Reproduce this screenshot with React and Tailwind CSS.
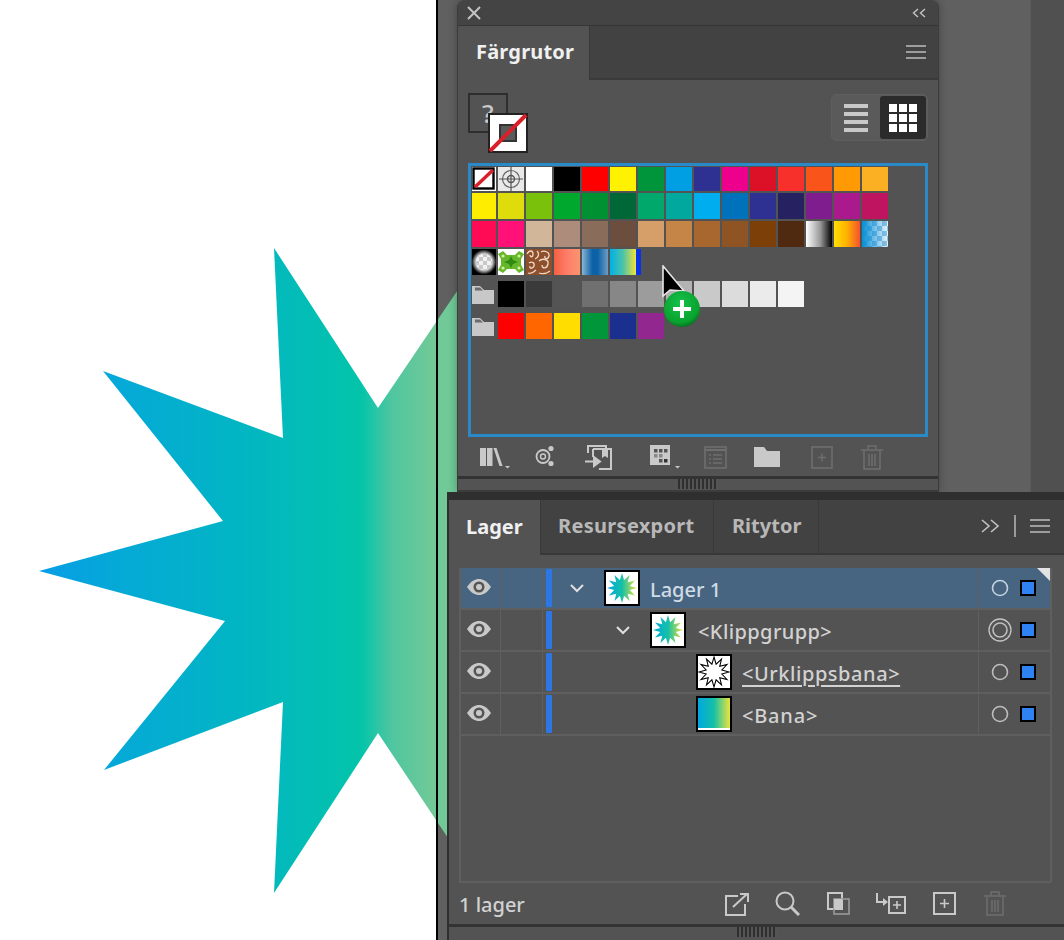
import React from "react";

const font = { fontFamily: '"Noto Sans", "Open Sans", sans-serif' };

function Sw({ c, first }) {
  return <div className={`${first ? "w-[24px]" : "w-[26px]"} h-full shrink-0`} style={c ? { background: c } : undefined} />;
}

function SwatchNone() {
  return (
    <svg width="24" height="24" viewBox="0 0 24 24" className="shrink-0">
      <rect width="24" height="24" fill="#fff" />
      <rect x="1.500" y="1.500" width="20" height="20" fill="#fff" stroke="#000" strokeWidth="2.400" />
      <path d="M3 20 L21 3" stroke="#d8202a" strokeWidth="3.400" />
    </svg>
  );
}
function SwatchRegister() {
  return (
    <svg width="26" height="24" viewBox="0 0 26 24" className="shrink-0">
      <rect width="26" height="24" fill="#e9e9e9" />
      <circle cx="13" cy="12" r="8.500" fill="none" stroke="#666" strokeWidth="1.200" />
      <circle cx="13" cy="12" r="3.500" fill="none" stroke="#555" strokeWidth="1.400" />
      <path d="M13 0V24M1 12H25" stroke="#555" strokeWidth="1.200" />
    </svg>
  );
}
function SwatchGlow() {
  return (
    <svg width="24" height="26" viewBox="1 0 24 26" className="shrink-0">
      <defs>
        <radialGradient id="glow">
          <stop offset="0.6" stopColor="#f0f0f0" />
          <stop offset="1" stopColor="#000" />
        </radialGradient>
        <pattern id="chk" width="8" height="8" patternUnits="userSpaceOnUse">
          <rect width="8" height="8" fill="#f2f2f2" />
          <rect width="4" height="4" fill="#c8c8c8" />
          <rect x="4" y="4" width="4" height="4" fill="#c8c8c8" />
        </pattern>
      </defs>
      <rect width="26" height="26" fill="#000" />
      <circle cx="13" cy="13" r="12.500" fill="url(#glow)" />
      <circle cx="13" cy="13" r="8" fill="url(#chk)" />
    </svg>
  );
}
function SwatchGreen() {
  return (
    <svg width="26" height="26" viewBox="0 0 26 26" className="shrink-0">
      <rect width="26" height="26" fill="#fff" />
      <path d="M0 5 L5 2 L9 6 L17 6 L21 2 L26 5 L23 10 L23 16 L26 21 L21 24 L17 20 L9 20 L5 24 L0 21 L3 16 L3 10Z" fill="#66b82a" />
      <path d="M13 7 L15 11 L20 13 L15 15 L13 19 L11 15 L6 13 L11 11Z" fill="#2f8a12" />
      <circle cx="5" cy="7" r="1.600" fill="#d4ee9a" />
      <circle cx="21" cy="7" r="1.600" fill="#d4ee9a" />
      <circle cx="5" cy="19" r="1.600" fill="#d4ee9a" />
      <circle cx="21" cy="19" r="1.600" fill="#d4ee9a" />
    </svg>
  );
}
function SwatchBrown() {
  return (
    <svg width="26" height="26" viewBox="0 0 26 26" className="shrink-0">
      <rect width="26" height="26" fill="#8e4f2c" />
      <g fill="none" stroke="#eed9c4" strokeWidth="1.300">
        <path d="M1 5c2-4 6-4 6 0s-3 3-3 1" />
        <path d="M11 2c3 3 1 7-2 8" />
        <path d="M15 3c3-2 9 0 8 4s-5 3-4 0" />
        <path d="M3 14c3-2 6 0 5 3s-5 3-4 0" />
        <path d="M13 12c3-3 10-2 9 3s-6 5-6 1" />
        <path d="M2 24c3 1 6-1 8-3" />
        <path d="M13 24c3 1 7 1 11-2" />
      </g>
    </svg>
  );
}

const row1 = ["#fff", "#000", "#ff0000", "#fff200", "#00953a", "#009fe3", "#2e3192", "#ec008c", "#dc1128", "#f7302c", "#f9541a", "#ff9a05", "#fbb023"];
const row2 = ["#ffed00", "#dedc0a", "#7ac10c", "#00a82d", "#009133", "#006837", "#00a86b", "#00a89d", "#00aeef", "#0072bc", "#2e3192", "#262262", "#7f1d8f", "#aa1a8c", "#bf1560"];
const row3 = ["#ff0a55", "#ff1178", "#d1b69a", "#ad8c7c", "#8a6c5a", "#6c4e3e", "#d69e68", "#c58547", "#a8672f", "#8f5423", "#7c3f08", "#4f2a10"];
const row5 = ["#000", "#3a3a3a", "#545454", "#707070", "#878787", "#9c9c9c", "#b3b3b3", "#c9c9c9", "#dcdcdc", "#ebebeb", "#f4f4f4"];
const row6 = ["#ff0000", "#ff6600", "#ffdd00", "#009639", "#1b2f8f", "#92288f"];

function Folder() {
  return (
    <svg width="22" height="19" viewBox="0 0 22 19" className="shrink-0 mr-[2px]">
      <path d="M0 1h8l4 4h10v14H0z" fill="#c8c8c8" />
      <path d="M3 2.500h5l3 3H3z" fill="#6a6a6a" />
    </svg>
  );
}

function Handle({ w = 40 }) {
  return (
    <div
      className="h-[10px]"
      style={{ width: w, background: "repeating-linear-gradient(90deg,#2f2f2f 0 2px,#555 2px 4px)" }}
    />
  );
}

function Hamburger() {
  return (
    <svg width="20" height="14" viewBox="0 0 20 14">
      <path d="M0 1H20M0 7H20M0 13H20" stroke="#bdbdbd" strokeWidth="1.600" />
    </svg>
  );
}

const D = "#c9c9c9";
const Dim = "#6f6f6f";

function Toolbar() {
  return (
    <div className="flex items-center h-[36px] mt-[2px]">
      <svg width="31" height="23" viewBox="0 0 31 23" className="ml-[22px] shrink-0">
        <rect x="0" y="2" width="6" height="18" fill={D} />
        <rect x="7" y="2" width="5.500" height="18" fill={D} />
        <path d="M13.500 2h3l6 18h-3z" fill={D} />
        <path d="M25 20h5l-2.500 2.400z" fill={D} />
      </svg>
      <svg width="21" height="24" viewBox="0 0 21 24" className="ml-[24px] shrink-0">
        <circle cx="8" cy="11.500" r="6.500" fill="none" stroke={D} strokeWidth="1.800" />
        <circle cx="8" cy="11.500" r="2.500" fill="none" stroke={D} strokeWidth="1.400" />
        <circle cx="16" cy="3.500" r="2.600" fill={D} />
        <circle cx="16" cy="18.500" r="2.600" fill={D} />
      </svg>
      <svg width="27" height="26" viewBox="0 0 27 26" className="ml-[29px] shrink-0">
        <path d="M3 9V2h18v3" fill="none" stroke={D} strokeWidth="2" />
        <path d="M8 5h18v20H14M8 5v8" fill="none" stroke={D} strokeWidth="2" />
        <path d="M0 17.500h9M9 13l6 4.500-6 4.500z" fill={D} stroke={D} strokeWidth="2" />
        <path d="M17 5h6v9l-3-2-3 2z" fill={D} />
      </svg>
      <svg width="31" height="25" viewBox="0 0 31 25" className="ml-[38px] shrink-0">
        <rect width="20" height="20" fill={D} />
        <g fill="#555">
          <rect x="4" y="4" width="3.500" height="3.500" />
          <rect x="9" y="4" width="3.500" height="3.500" />
          <rect x="14" y="4" width="3.500" height="3.500" />
          <rect x="4" y="9" width="3.500" height="3.500" fill="#888" />
          <rect x="9" y="9" width="3.500" height="3.500" fill="#888" />
          <rect x="9" y="14" width="3.500" height="3.500" />
          <rect x="14" y="14" width="3.500" height="3.500" fill="#333" />
        </g>
        <path d="M25 21h5l-2.500 2.400z" fill={D} />
      </svg>
      <svg width="23" height="23" viewBox="0 0 23 23" className="ml-[23px] shrink-0">
        <rect x="1" y="1" width="21" height="21" fill="none" stroke={Dim} strokeWidth="1.600" />
        <path d="M1 4h21" stroke={Dim} strokeWidth="2" />
        <path d="M5 9h2M9 9h9M5 13h2M9 13h9M5 17h2M9 17h9" stroke={Dim} strokeWidth="1.400" />
      </svg>
      <svg width="26" height="20" viewBox="0 0 26 20" className="ml-[27px] shrink-0">
        <path d="M0 0h10l3 4h13v16H0z" fill={D} />
      </svg>
      <svg width="22" height="23" viewBox="0 0 22 23" className="ml-[31px] shrink-0">
        <rect x="1" y="1" width="20" height="21" fill="none" stroke={Dim} strokeWidth="1.600" />
        <path d="M7 11.500h8M11 7.500v8" stroke={Dim} strokeWidth="1.400" />
      </svg>
      <svg width="22" height="25" viewBox="0 0 22 25" className="ml-[28px] shrink-0">
        <path d="M0 5h22M7 4V1h8v3M3 6v18h16V6M8 9v12M11 9v12M14 9v12" fill="none" stroke={Dim} strokeWidth="1.500" />
      </svg>
    </div>
  );
}

function SwatchesPanel() {
  return (
    <div className="relative z-10 w-[482px] h-[492px] ml-[19px] shrink-0 flex flex-col bg-[#535353] border-x border-b-2 border-[#3c3c3c] rounded-t-[8px] shadow-[0_0_8px_rgba(0,0,0,0.3)]">
      <div className="h-[26px] flex items-center justify-between pl-[9px] pr-[12px] bg-[#444] rounded-t-[8px] border-b border-[#353535] shrink-0">
        <svg width="14" height="14" viewBox="0 0 14 14">
          <path d="M1 1L13 13M13 1L1 13" stroke="#c4c4c4" strokeWidth="2" />
        </svg>
        <svg width="14" height="10" viewBox="0 0 14 10">
          <path d="M6 1L1.500 5 6 9M13 1L8.500 5 13 9" stroke="#c4c4c4" strokeWidth="1.400" fill="none" />
        </svg>
      </div>
      <div className="h-[54px] flex bg-[#424242] shrink-0">
        <div className="w-[132px] bg-[#535353] border-r border-[#393939] flex items-center pl-[18px] pb-[2px] text-[20px] font-bold text-[#f0f0f0] tracking-[0.2px]">Färgrutor</div>
        <div className="flex-1 border-b-2 border-[#3a3a3a] flex items-center justify-end pr-[12px]">
          <Hamburger />
        </div>
      </div>
      <div className="relative h-[83px] shrink-0">
        <div className="absolute left-[10px] top-[13px] w-[40px] h-[40px] border-2 border-[#2e2e2e] text-[#c8c8c8] text-[26px] font-medium leading-[36px] pl-[12px]">?</div>
        <svg width="40" height="40" viewBox="0 0 40 40" className="absolute left-[30px] top-[33px]">
          <rect x="1" y="1" width="38" height="38" fill="#fff" stroke="#222" strokeWidth="2" />
          <rect x="12" y="12" width="16" height="16" fill="#5a5a5a" stroke="#333" strokeWidth="2" />
          <path d="M2 38L38 2" stroke="#d8202a" strokeWidth="4" />
        </svg>
        <div className="absolute left-[373px] top-[14px] w-[97px] h-[47px] flex gap-[2px] p-[1px] rounded-[5px] border border-[#5e5e5e] bg-[#5a5a5a]">
          <div className="w-[45px] flex flex-col items-center justify-center gap-[4px]">
            <div className="w-[24px] h-[4px] bg-[#c8c8c8]" />
            <div className="w-[24px] h-[4px] bg-[#c8c8c8]" />
            <div className="w-[24px] h-[4px] bg-[#c8c8c8]" />
            <div className="w-[24px] h-[4px] bg-[#c8c8c8]" />
          </div>
          <div className="flex-1 bg-[#2b2b2b] rounded-[3px] flex items-center justify-center">
            <div className="grid grid-cols-3 gap-[2px]">
              {[0, 1, 2, 3, 4, 5, 6, 7, 8].map((i) => (
                <div key={i} className="w-[8px] h-[8px] bg-white" />
              ))}
            </div>
          </div>
        </div>
      </div>
      <div className="relative h-[274px] mx-[10px] border-[3px] border-[#2a8ac8] pt-[1px] pl-[1px] shrink-0 flex flex-col">
        <div className="flex gap-[2px] h-[24px]">
          <SwatchNone />
          <SwatchRegister />
          {row1.map((c, i) => (
            <Sw key={i} c={c} />
          ))}
        </div>
        <div className="flex gap-[2px] h-[26px] mt-[2px]">
          {row2.map((c, i) => (
            <Sw key={i} c={c} first={i === 0} />
          ))}
        </div>
        <div className="flex gap-[2px] h-[26px] mt-[2px]">
          {row3.map((c, i) => (
            <Sw key={i} c={c} first={i === 0} />
          ))}
          <Sw c="linear-gradient(90deg,#fff,#999 55%,#000 100%)" />
          <Sw c="linear-gradient(90deg,#ffe000,#ffb000 50%,#f4522e)" />
          <Sw c="linear-gradient(90deg,#0a8fd6 0%,rgba(10,143,214,0.1) 100%),repeating-conic-gradient(#fff 0 25%,#9cc7e6 0 50%) 0 0/10px 10px" />
        </div>
        <div className="flex gap-[2px] h-[26px] mt-[2px]">
          <SwatchGlow />
          <SwatchGreen />
          <SwatchBrown />
          <Sw c="linear-gradient(90deg,#f4603f,#ff7d6a 50%,#f9956b)" />
          <Sw c="linear-gradient(90deg,#8cb4d2,#0b62a6 40%,#0b62a6 60%,#6f9cc4)" />
          <Sw c="linear-gradient(90deg,#00b0e8,#4cc3a8 50%,#f2e33a)" />
          <div className="-ml-[2px] w-[5px] h-full bg-[#0a32e8]" />
        </div>
        <div className="flex gap-[2px] h-[26px] mt-[6px] items-center">
          <Folder />
          {row5.map((c, i) => (
            <Sw key={i} c={c} />
          ))}
        </div>
        <div className="flex gap-[2px] h-[26px] mt-[6px] items-center">
          <Folder />
          {row6.map((c, i) => (
            <Sw key={i} c={c} />
          ))}
        </div>
        <svg width="50" height="62" viewBox="0 0 50 62" className="absolute left-[190px] top-[99px]">
          <defs>
            <radialGradient id="gb" cx="0.45" cy="0.35" r="0.7">
              <stop offset="0" stopColor="#16c24a" />
              <stop offset="0.75" stopColor="#08a32f" />
              <stop offset="1" stopColor="#06621c" />
            </radialGradient>
          </defs>
          <path d="M2 1V31L9 25L23 26Z" fill="#000" stroke="#e6e6e6" strokeWidth="1.600" />
          <circle cx="21" cy="44" r="18" fill="url(#gb)" />
          <path d="M21 35V53M12 44H30" stroke="#fff" strokeWidth="4" />
        </svg>
      </div>
      <Toolbar />
      <div className="h-[3px] mt-[1px] bg-[#333] shrink-0" />
      <div className="flex-1 flex justify-center">
        <Handle w={40} />
      </div>
    </div>
  );
}

function Eye() {
  return (
    <svg width="26" height="18" viewBox="0 0 26 18">
      <path d="M1 9C5 3 9 1 13 1s8 2 12 8c-4 6-8 8-12 8S5 15 1 9z" fill="#c9c9c9" />
      <circle cx="13" cy="9" r="5.500" fill="#555" />
      <circle cx="13" cy="9" r="3" fill="#c9c9c9" />
    </svg>
  );
}

const starPts = Array.from({ length: 24 }, (_, i) => {
  const a = (i / 24) * Math.PI * 2 - Math.PI / 2;
  const r = i % 2 === 0 ? 50 : 27;
  return `${(50 + r * Math.cos(a)).toFixed(1)},${(50 + r * Math.sin(a)).toFixed(1)}`;
}).join(" ");

function Thumb({ kind }) {
  return (
    <svg width="36" height="36" viewBox="0 0 36 36" className="shrink-0">
      <defs>
        <linearGradient id={`tg${kind}`} x1="0" x2="1" y1="0" y2="0">
          <stop offset="0" stopColor="#00a7e0" />
          <stop offset="0.5" stopColor="#15c0a8" />
          <stop offset="1" stopColor="#ece53a" />
        </linearGradient>
      </defs>
      <rect x="1" y="1" width="34" height="34" fill="#fff" stroke="#000" strokeWidth="2" />
      {kind === "star" && (
        <g transform="translate(3 3) scale(0.3)">
          <polygon points={starPts} fill={`url(#tg${kind})`} />
        </g>
      )}
      {kind === "clip" && (
        <g transform="translate(3 3) scale(0.3)">
          <polygon points={starPts} fill="#fff" stroke="#000" strokeWidth="3.500" />
        </g>
      )}
      {kind === "path" && <rect x="2" y="2" width="32" height="30" fill={`url(#tg${kind})`} />}
    </svg>
  );
}

function Chevron() {
  return (
    <svg width="16" height="10" viewBox="0 0 16 10" className="shrink-0">
      <path d="M2 2l6 6 6-6" fill="none" stroke="#e0e0e0" strokeWidth="2" />
    </svg>
  );
}

function LayerRow({ selected, indent, chevron, thumb, label, underline, doubleRing, tracking, labelGap = "ml-[10px]" }) {
  return (
    <div className={`relative flex h-[42px] shrink-0 border-b-2 border-[#5f5f5f] ${selected ? "bg-[#476580]" : ""}`}>
      <div className="w-[40px] flex items-center justify-center border-r border-[#5f5f5f] pb-[2px] pr-[3px]">
        <Eye />
      </div>
      <div className="w-[42px] border-r border-[#5f5f5f]" />
      <div className="w-[6px] ml-[3px] my-[1px] bg-[#2e76e4] rounded-[1px]" />
      <div className="flex-1 flex items-center" style={{ paddingLeft: indent }}>
        {chevron && (
          <div className="mr-[19px]">
            <Chevron />
          </div>
        )}
        <Thumb kind={thumb} />
        <span
          className={`${labelGap} text-[20px] font-medium pt-[3px] ${tracking} ${selected ? "text-[#cfdbe6]" : "text-[#d2d2d2]"} ${underline ? "underline underline-offset-[4px] decoration-2" : ""}`}
        >
          {label}
        </span>
      </div>
      <div className="w-[72px] border-l border-[#5f5f5f] flex items-center">
        <div className="w-[41px] flex items-center justify-center">
          {doubleRing ? (
            <svg width="24" height="24" viewBox="0 0 24 24">
              <circle cx="12" cy="12" r="11" fill="none" stroke="#c4c4c4" strokeWidth="1.300" />
              <circle cx="12" cy="12" r="7" fill="none" stroke="#bdbdbd" strokeWidth="1.600" />
            </svg>
          ) : (
            <svg width="18" height="18" viewBox="0 0 18 18">
              <circle cx="9" cy="9" r="7.500" fill="none" stroke={selected ? "#c3d2de" : "#bdbdbd"} strokeWidth="1.600" />
            </svg>
          )}
        </div>
        <div className="w-[16px] h-[16px] bg-[#2e82f2] border-2 border-black" />
      </div>
      {selected && (
        <svg width="13" height="13" viewBox="0 0 13 13" className="absolute right-0 top-0">
          <path d="M0 0H13V13Z" fill="#e3e3e3" />
        </svg>
      )}
    </div>
  );
}

function LayersPanel() {
  return (
    <div className="relative z-10 h-[448px] ml-[9px] flex flex-col bg-[#535353] border-l-2 border-t-[8px] border-[#2f2f2f]">
      <div className="h-[55px] flex bg-[#424242] shrink-0 border-b-2 border-[#383838]">
        <div className="w-[92px] -mb-[2px] bg-[#535353] border-r border-[#393939] flex items-center pl-[17px] pb-[2px] text-[20px] font-bold text-[#f0f0f0]">Lager</div>
        <div className="w-[173px] border-r border-[#393939] flex items-center pl-[17px] pb-[2px] text-[20px] font-bold text-[#b8b8b8] tracking-[0.3px]">Resursexport</div>
        <div className="w-[105px] border-r border-[#393939] flex items-center pl-[18px] pb-[2px] text-[20px] font-bold text-[#b8b8b8]">Ritytor</div>
        <div className="flex-1 flex items-center justify-end pr-[14px] gap-[14px] pb-[2px]">
          <svg width="20" height="14" viewBox="0 0 20 14">
            <path d="M2 1l7 6-7 6M11 1l7 6-7 6" fill="none" stroke="#c4c4c4" strokeWidth="1.600" />
          </svg>
          <div className="w-[2px] h-[22px] bg-[#9a9a9a]" />
          <Hamburger />
        </div>
      </div>
      <div className="mt-[13px] ml-[10px] mr-[12px] h-[315px] shrink-0 border-2 border-t-0 border-[#5f5f5f] flex flex-col rounded-b-[2px]">
        <LayerRow selected indent={17} chevron thumb="star" label="Lager 1" tracking="tracking-[0px]" />
        <LayerRow indent={63} chevron thumb="star" label="<Klippgrupp>" doubleRing tracking="tracking-[0.4px]" labelGap="ml-[12px]" />
        <LayerRow indent={144} thumb="clip" label="<Urklippsbana>" underline tracking="tracking-[0.55px]" />
        <LayerRow indent={144} thumb="path" label="<Bana>" tracking="tracking-[0.8px]" />
      </div>
      <div className="h-[41px] flex items-center shrink-0">
        <span className="ml-[10px] w-[78px] pt-[2px] text-[20px] font-medium text-[#d2d2d2]">1 lager</span>
        <svg width="25" height="24" viewBox="0 0 25 24" className="ml-[188px] shrink-0">
          <path d="M13 4H1v19h19V12" fill="none" stroke={D} strokeWidth="2" />
          <path d="M8 15L22 2M15 2h8v8" fill="none" stroke={D} strokeWidth="2" />
        </svg>
        <svg width="25" height="25" viewBox="0 0 25 25" className="ml-[25px] shrink-0">
          <circle cx="10" cy="10" r="8.500" fill="none" stroke={D} strokeWidth="2" />
          <path d="M16 16l8 8" stroke={D} strokeWidth="3" />
        </svg>
        <svg width="23" height="23" viewBox="0 0 23 23" className="ml-[27px] shrink-0">
          <rect x="1" y="1" width="14" height="16" fill="none" stroke={D} strokeWidth="2" />
          <rect x="7" y="7" width="15" height="15" fill="none" stroke="#9a9a9a" strokeWidth="1.600" />
          <rect x="7" y="7" width="8" height="10" fill={D} />
        </svg>
        <svg width="31" height="21" viewBox="0 0 31 21" className="ml-[25px] shrink-0">
          <path d="M2 0v9h6" fill="none" stroke={D} strokeWidth="2" />
          <path d="M8 5l5 4-5 4z" fill={D} />
          <rect x="14" y="4" width="16" height="16" fill="none" stroke={D} strokeWidth="2" />
          <path d="M18 12h8M22 8v8" stroke={D} strokeWidth="1.600" />
        </svg>
        <svg width="23" height="23" viewBox="0 0 23 23" className="ml-[27px] shrink-0">
          <rect x="1" y="1" width="21" height="21" fill="none" stroke={D} strokeWidth="2" />
          <path d="M7 11.500h9M11.500 7v9" stroke={D} strokeWidth="1.600" />
        </svg>
        <svg width="22" height="25" viewBox="0 0 22 25" className="ml-[28px] shrink-0">
          <path d="M0 5h22M7 4V1h8v3M3 6v18h16V6M8 9v12M11 9v12M14 9v12" fill="none" stroke={Dim} strokeWidth="1.500" />
        </svg>
      </div>
      <div className="h-[3px] bg-[#333] shrink-0" />
      <div className="flex-1 flex justify-center">
        <Handle w={40} />
      </div>
    </div>
  );
}

export default function App() {
  return (
    <div className="relative flex w-[1064px] h-[940px] overflow-hidden bg-white" style={font}>
      <svg width="480" height="940" viewBox="0 0 480 940" className="absolute left-0 top-0 z-[1]">
        <defs>
          <linearGradient id="star" gradientUnits="userSpaceOnUse" x1="39" x2="480" y1="0" y2="0">
            <stop offset="0" stopColor="#069ee6" />
            <stop offset="0.16" stopColor="#05a8d8" />
            <stop offset="0.45" stopColor="#02b5c4" />
            <stop offset="0.73" stopColor="#03c4aa" />
            <stop offset="0.8" stopColor="#4fc6a0" />
            <stop offset="0.89" stopColor="#70c997" />
            <stop offset="1" stopColor="#70c997" />
          </linearGradient>
        </defs>
        <polygon
          points="274,248 378,408 470,272 470,871 378,733 274,893 283,702 104,770 225,621 39,571 223,521 103,371 283,438"
          fill="url(#star)"
        />
      </svg>
      <div className="w-[436px] shrink-0" />
      <div className="relative z-[2] w-[2px] shrink-0 bg-black" />
      <div className="flex-1 flex flex-col bg-[#606060]">
        <div className="flex h-[492px] shrink-0">
          <SwatchesPanel />
          <div className="flex-1" />
          <div className="w-[34px] shrink-0 bg-[#505050] border-l border-[#5a5a5a]" />
        </div>
        <LayersPanel />
      </div>
    </div>
  );
}
